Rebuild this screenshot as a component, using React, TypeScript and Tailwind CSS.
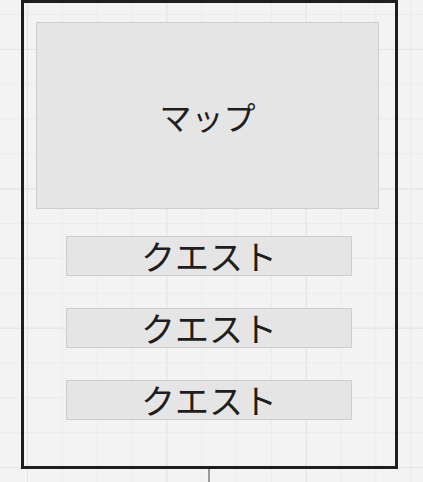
export default function App() {
  const quests = ['クエスト', 'クエスト', 'クエスト'];

  return (
    <div
      className="w-[423px] h-[482px] overflow-hidden bg-[#f3f3f3] bg-[image:linear-gradient(to_right,#e4e4e4_1px,transparent_1px),linear-gradient(to_bottom,#e4e4e4_1px,transparent_1px),linear-gradient(to_right,#ebebeb_1px,transparent_1px),linear-gradient(to_bottom,#ebebeb_1px,transparent_1px)] bg-[size:139.4px_139.4px,139.4px_139.4px,34.85px_34.85px,34.85px_34.85px] bg-[position:27px_0,0_49px,27px_0,0_14px]"
      style={{ fontFamily: '"Noto Sans CJK JP", "Noto Sans", sans-serif' }}
    >
      <div className="flex flex-col items-start">
        {/* phone frame */}
        <div className="ml-[21px] w-[377px] h-[469px] border-[3px] border-[#1e1e1e] flex flex-col pt-[19px] pl-[12px]">
          <div className="w-[343px] h-[187px] bg-[#e5e5e5] border border-[#cdcdcd] flex items-center justify-center">
            <span className="text-[32px] leading-none text-[#1e1e1e]">マップ</span>
          </div>

          <div className="flex flex-col gap-[32px] mt-[27px] ml-[30px]">
            {quests.map((q, i) => (
              <div
                key={i}
                className="w-[286px] h-[40px] bg-[#e5e5e5] border border-[#cdcdcd] flex items-center justify-center"
              >
                <span className="text-[34px] leading-none text-[#1e1e1e]">{q}</span>
              </div>
            ))}
          </div>
        </div>
        {/* connector below the frame */}
        <div className="ml-[208px] w-[2px] h-[13px] bg-[#9a9a9a]" />
      </div>
    </div>
  );
}
